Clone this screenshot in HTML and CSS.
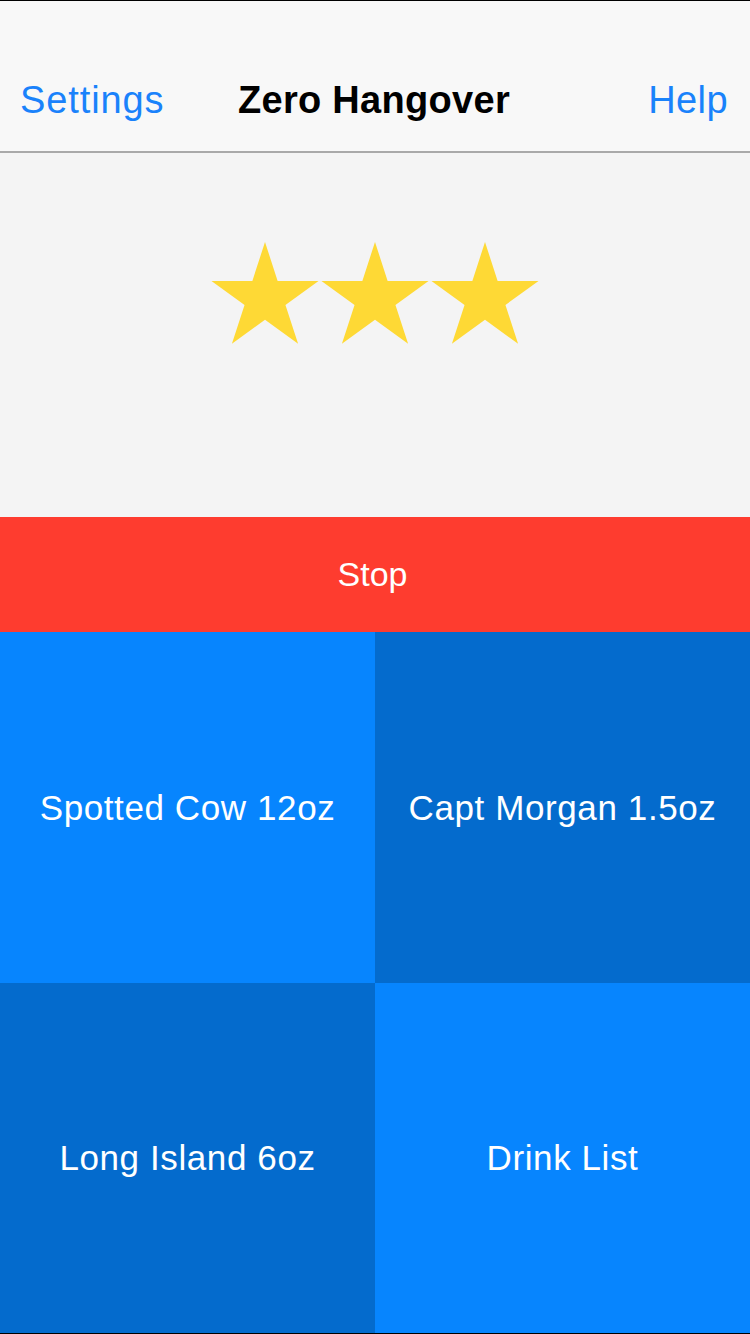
FILE: index.html
```html
<!DOCTYPE html>
<html lang="en">
<head>
<meta charset="utf-8">
<title>Zero Hangover</title>
<link rel="stylesheet" href="styles.css">
</head>
<body>
<div class="screen">
  <header class="nav">
    <span class="nav-btn nav-left">Settings</span>
    <span class="nav-title">Zero Hangover</span>
    <span class="nav-btn nav-right">Help</span>
  </header>
  <section class="rating">
    <svg class="star" viewBox="0 0 110 104" width="110" height="104"><polygon points="55,1 67.64,39.91 108.55,39.9 75.45,63.94 88.09,102.85 55,78.8 21.91,102.85 34.55,63.94 1.45,39.9 42.36,39.91"/></svg>
    <svg class="star" viewBox="0 0 110 104" width="110" height="104"><polygon points="55,1 67.64,39.91 108.55,39.9 75.45,63.94 88.09,102.85 55,78.8 21.91,102.85 34.55,63.94 1.45,39.9 42.36,39.91"/></svg>
    <svg class="star" viewBox="0 0 110 104" width="110" height="104"><polygon points="55,1 67.64,39.91 108.55,39.9 75.45,63.94 88.09,102.85 55,78.8 21.91,102.85 34.55,63.94 1.45,39.9 42.36,39.91"/></svg>
  </section>
  <div class="stop">Stop</div>
  <div class="grid">
    <div class="cell light">Spotted Cow 12oz</div>
    <div class="cell dark">Capt Morgan 1.5oz</div>
    <div class="cell dark">Long Island 6oz</div>
    <div class="cell light">Drink List</div>
  </div>
</div>
</body>
</html>
```
FILE: styles.css
```css
* { box-sizing: border-box; }
html, body { margin: 0; padding: 0; }
body {
  width: 750px;
  height: 1334px;
  font-family: "Liberation Sans", Arial, Helvetica, sans-serif;
  background: #ffffff;
}
.screen {
  width: 750px;
  height: 1334px;
  display: flex;
  flex-direction: column;
  border-top: 1px solid #000;
  border-bottom: 1px solid #000;
}
.nav {
  height: 152px;
  flex: none;
  background: #f8f8f8;
  border-bottom: 2px solid #a9a9a9;
  display: grid;
  grid-template-columns: 1fr auto 1fr;
  align-items: center;
  padding: 48px 22px 0 20px;
}
.nav-btn {
  color: #1a82fb;
  font-size: 38px;
  letter-spacing: 0.9px;
}
.nav-left { justify-self: start; }
.nav-right { justify-self: end; letter-spacing: 0.4px; }
.nav-title {
  color: #000;
  font-size: 38px;
  font-weight: bold;
  letter-spacing: 0.3px;
}
.rating {
  height: 364px;
  flex: none;
  background: #f4f4f4;
  display: flex;
  justify-content: center;
  align-items: flex-start;
  padding-top: 88px;
}
.star { display: block; }
.star polygon { fill: #fed935; }
.stop {
  height: 115px;
  flex: none;
  background: #fe3c2f;
  color: #fff;
  font-size: 34px;
  display: flex;
  align-items: center;
  justify-content: center;
  padding-right: 5px;
}
.grid {
  flex: 1;
  display: grid;
  grid-template-columns: 375px 375px;
  grid-template-rows: 351px 350px;
}
.cell {
  color: #fff;
  font-size: 35px;
  letter-spacing: 0.6px;
  display: flex;
  align-items: center;
  justify-content: center;
}
.light { background: #0785fe; }
.dark { background: #046bcd; }
```
